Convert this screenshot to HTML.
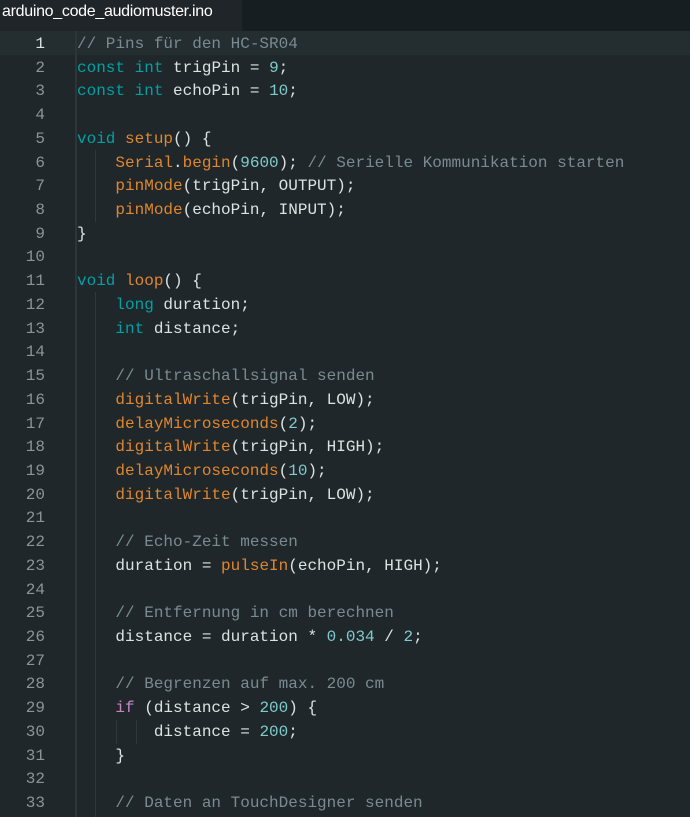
<!DOCTYPE html>
<html><head><meta charset="utf-8"><style>
html,body{margin:0;padding:0;width:690px;height:817px;overflow:hidden;background:#1f272a;}
.tabbar{position:absolute;left:0;top:0;width:690px;height:31px;background:#171e21;}
.tab{position:absolute;left:0;top:0;width:242px;height:31px;background:#1f2528;color:#fff;font:16px "Liberation Sans",sans-serif;line-height:24px;padding-left:2px;box-sizing:border-box;letter-spacing:-0.3px;}
.hl{position:absolute;left:0;top:31px;width:690px;height:24px;background:#242d30;}
.gut{position:absolute;left:75px;top:31px;width:2px;height:786px;background:#2c3538;}
.g{position:absolute;width:1px;background:#2f393c;}
.code{position:absolute;left:0;top:33px;font:16px "Liberation Mono",monospace;line-height:23.72px;white-space:pre;color:#dae3e3;}
.ln{display:inline-block;width:45px;text-align:right;color:#8a9599;margin-right:32px;}
.ln.a{color:#dae3e3;}
.c{color:#7a8b90}.k{color:#00a0a5}.f{color:#e0862f}.n{color:#7fcbcd}.p{color:#c586c0}
</style></head><body>
<div class="tabbar"><div class="tab">arduino_code_audiomuster.ino</div></div>
<div class="hl"></div>
<div class="gut"></div>
<div class="g" style="left:95px;top:150px;height:72px"></div>
<div class="g" style="left:95px;top:292px;height:525px"></div>
<div class="g" style="left:116px;top:720px;height:24px"></div>
<div class="g" style="left:136px;top:720px;height:24px"></div>
<div class="code"><span class="ln a">1</span><span class="c">// Pins für den HC-SR04</span>
<span class="ln">2</span><span class="k">const</span> <span class="k">int</span> trigPin = <span class="n">9</span>;
<span class="ln">3</span><span class="k">const</span> <span class="k">int</span> echoPin = <span class="n">10</span>;
<span class="ln">4</span>
<span class="ln">5</span><span class="k">void</span> <span class="f">setup</span>() {
<span class="ln">6</span>    <span class="f">Serial</span>.<span class="f">begin</span>(<span class="n">9600</span>); <span class="c">// Serielle Kommunikation starten</span>
<span class="ln">7</span>    <span class="f">pinMode</span>(trigPin, OUTPUT);
<span class="ln">8</span>    <span class="f">pinMode</span>(echoPin, INPUT);
<span class="ln">9</span>}
<span class="ln">10</span>
<span class="ln">11</span><span class="k">void</span> <span class="f">loop</span>() {
<span class="ln">12</span>    <span class="k">long</span> duration;
<span class="ln">13</span>    <span class="k">int</span> distance;
<span class="ln">14</span>
<span class="ln">15</span>    <span class="c">// Ultraschallsignal senden</span>
<span class="ln">16</span>    <span class="f">digitalWrite</span>(trigPin, LOW);
<span class="ln">17</span>    <span class="f">delayMicroseconds</span>(<span class="n">2</span>);
<span class="ln">18</span>    <span class="f">digitalWrite</span>(trigPin, HIGH);
<span class="ln">19</span>    <span class="f">delayMicroseconds</span>(<span class="n">10</span>);
<span class="ln">20</span>    <span class="f">digitalWrite</span>(trigPin, LOW);
<span class="ln">21</span>
<span class="ln">22</span>    <span class="c">// Echo-Zeit messen</span>
<span class="ln">23</span>    duration = <span class="f">pulseIn</span>(echoPin, HIGH);
<span class="ln">24</span>
<span class="ln">25</span>    <span class="c">// Entfernung in cm berechnen</span>
<span class="ln">26</span>    distance = duration * <span class="n">0.034</span> / <span class="n">2</span>;
<span class="ln">27</span>
<span class="ln">28</span>    <span class="c">// Begrenzen auf max. 200 cm</span>
<span class="ln">29</span>    <span class="p">if</span> (distance &gt; <span class="n">200</span>) {
<span class="ln">30</span>        distance = <span class="n">200</span>;
<span class="ln">31</span>    }
<span class="ln">32</span>
<span class="ln">33</span>    <span class="c">// Daten an TouchDesigner senden</span>
</div>
</body></html>
